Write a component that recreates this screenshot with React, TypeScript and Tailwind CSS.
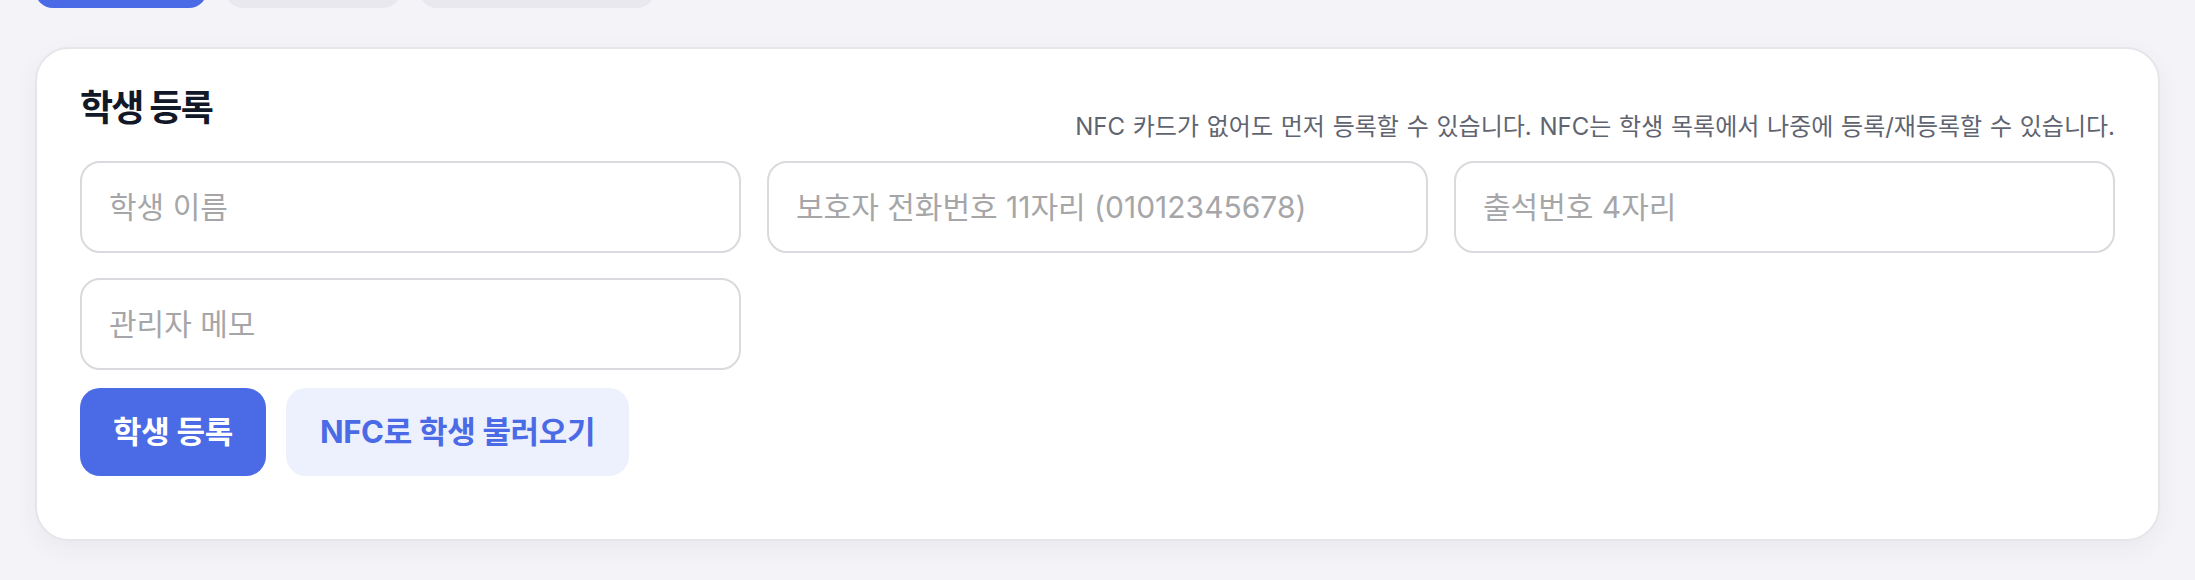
import React from "react";

const FONT = 'Inter, "Noto Sans CJK KR", "Noto Sans", "Liberation Sans", sans-serif';

const tabs = [
  { w: "w-[172px]", active: true },
  { w: "w-[176px]", active: false },
  { w: "w-[236px]", active: false },
];

function Field({ placeholder }: { placeholder: string }) {
  return (
    <input
      placeholder={placeholder}
      className="h-[92px] w-full rounded-[20px] border-2 border-[#d9dade] bg-white px-[27px] text-[30px] text-[#1f2937] outline-none placeholder:text-[#a6a6a8]"
    />
  );
}

export default function App() {
  return (
    <div className="min-h-screen overflow-hidden bg-[#f4f4f8] px-[35px] pb-[40px]" style={{ fontFamily: FONT }}>
      <div className="-mt-[44px] flex gap-[18px]">
        {tabs.map((t, i) => (
          <div
            key={i}
            className={`h-[52px] rounded-[18px] ${t.w} ${t.active ? "bg-[#4b6ae6]" : "bg-[#e8e8ee]"}`}
          />
        ))}
      </div>

      <div className="mt-[39px] rounded-[34px] border-2 border-[#e6e6ea] bg-white px-[43px] pb-[63px] pt-[38px] shadow-[0_8px_24px_rgba(20,20,60,0.05)]">
        <div className="flex items-end justify-between">
          <h2 className="mb-[12px] text-[36px] font-bold leading-[43px] tracking-[-0.05em] text-[#111827]">
            학생 등록
          </h2>
          <p className="text-[24px] leading-[30px] text-[#5f6470] [word-spacing:1px]">
            NFC 카드가 없어도 먼저 등록할 수 있습니다. NFC는 학생 목록에서 나중에 등록/재등록할 수 있습니다.
          </p>
        </div>

        <div className="mt-[19px] grid grid-cols-3 gap-x-[26px] gap-y-[25px]">
          <Field placeholder="학생 이름" />
          <Field placeholder="보호자 전화번호 11자리 (01012345678)" />
          <Field placeholder="출석번호 4자리" />
          <Field placeholder="관리자 메모" />
        </div>

        <div className="mt-[18px] flex gap-[20px]">
          <button className="h-[88px] rounded-[20px] bg-[#4b6ae6] px-[33px] text-[31px] font-bold tracking-[-0.01em] text-white">
            학생 등록
          </button>
          <button className="h-[88px] rounded-[20px] bg-[#edf0fd] px-[34px] text-[31px] font-bold tracking-[-0.01em] text-[#4b6ae6]">
            NFC로 학생 불러오기
          </button>
        </div>
      </div>
    </div>
  );
}
